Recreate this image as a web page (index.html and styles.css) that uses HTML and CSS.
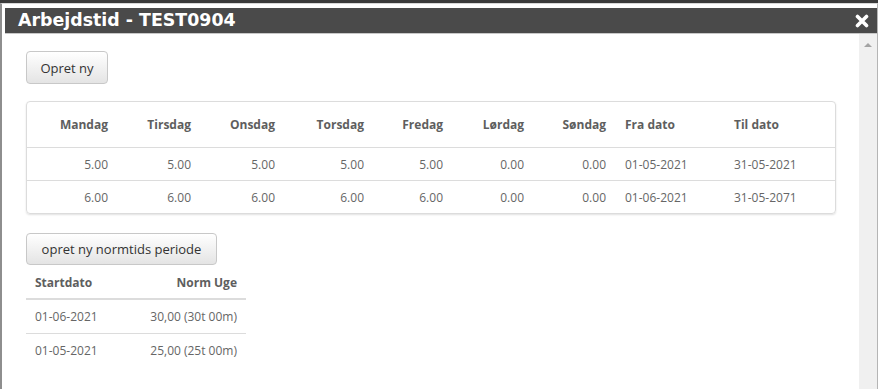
FILE: index.html
```html
<!DOCTYPE html>
<html lang="da">
<head>
<meta charset="utf-8">
<title>Arbejdstid</title>
<link rel="stylesheet" href="styles.css">
</head>
<body>
<div class="dialog">
  <div class="titlebar">
    <span class="title">Arbejdstid - TEST0904</span>
    <svg class="close" width="14" height="14" viewBox="0 0 14 14" aria-label="Luk">
      <path d="M2.5 2.5 L11.5 11.5 M11.5 2.5 L2.5 11.5" stroke="#fff" stroke-width="3.6" stroke-linecap="round"/>
    </svg>
  </div>
  <div class="content">
    <div class="main">
      <button class="btn btn-first">Opret ny</button>
      <div class="panel">
        <table class="week">
          <colgroup>
            <col class="c1"><col class="c2"><col class="c3"><col class="c4"><col class="c5"><col class="c6"><col class="c7"><col class="c8"><col class="c9">
          </colgroup>
          <thead>
            <tr>
              <th class="num">Mandag</th><th class="num">Tirsdag</th><th class="num">Onsdag</th><th class="num">Torsdag</th><th class="num">Fredag</th><th class="num">Lørdag</th><th class="num">Søndag</th><th class="date">Fra dato</th><th class="date">Til dato</th>
            </tr>
          </thead>
          <tbody>
            <tr>
              <td class="num">5.00</td><td class="num">5.00</td><td class="num">5.00</td><td class="num">5.00</td><td class="num">5.00</td><td class="num">0.00</td><td class="num">0.00</td><td class="date">01-05-2021</td><td class="date">31-05-2021</td>
            </tr>
            <tr>
              <td class="num">6.00</td><td class="num">6.00</td><td class="num">6.00</td><td class="num">6.00</td><td class="num">6.00</td><td class="num">0.00</td><td class="num">0.00</td><td class="date">01-06-2021</td><td class="date">31-05-2071</td>
            </tr>
          </tbody>
        </table>
      </div>
      <button class="btn btn-second">opret ny normtids periode</button>
      <table class="norm">
        <thead>
          <tr><th class="left">Startdato</th><th class="right">Norm Uge</th></tr>
        </thead>
        <tbody>
          <tr><td class="left">01-06-2021</td><td class="right">30,00 (30t 00m)</td></tr>
          <tr><td class="left">01-05-2021</td><td class="right">25,00 (25t 00m)</td></tr>
        </tbody>
      </table>
    </div>
    <div class="scrollbar">
      <span class="arrow-up"></span>
    </div>
  </div>
</div>
</body>
</html>
```

FILE: styles.css
```css
html, body {
  margin: 0;
  padding: 0;
}
body {
  background: #3a3a3a;
  font-family: "Open Sans", "Liberation Sans", sans-serif;
  overflow: hidden;
}
.dialog {
  margin-top: 3px;
  height: 386px;
  box-sizing: border-box;
  background: #fff;
  border-left: 2px solid #8e8e8e;
  border-right: 1px solid #b5b5b5;
  border-top: 1px solid #d8d8d8;
  padding-top: 4px;
  display: flex;
  flex-direction: column;
}
.titlebar {
  margin-left: 3px;
  height: 25px;
  background: #4a4a4a;
  border-bottom: 1px solid #c8c8c8;
  display: flex;
  align-items: center;
  justify-content: space-between;
  padding: 0 8px 0 13px;
  flex: none;
}
.title {
  font-family: "DejaVu Sans", Verdana, sans-serif;
  font-weight: bold;
  font-size: 17.4px;
  color: #fff;
  line-height: 25px;
}
.close {
  display: block;
  margin-top: 1px;
}
.content {
  flex: 1;
  display: flex;
  min-height: 0;
}
.main {
  flex: 1;
  padding: 17px 0 0 24px;
  display: flex;
  flex-direction: column;
  align-items: flex-start;
}
.scrollbar {
  width: 18px;
  background: #f0f0f0;
  display: flex;
  justify-content: center;
  padding-top: 9px;
  box-sizing: border-box;
}
.arrow-up {
  width: 0;
  height: 0;
  border-left: 4px solid transparent;
  border-right: 4px solid transparent;
  border-bottom: 4px solid #a3a3a3;
}
.btn {
  font-family: "Open Sans", "Liberation Sans", sans-serif;
  font-size: 13px;
  color: #333;
  background: linear-gradient(#ffffff, #e4e4e4);
  border: 1px solid #c8c8c8;
  border-radius: 4px;
  padding: 0;
  margin: 0;
  white-space: nowrap;
  text-align: center;
  cursor: pointer;
}
.btn-first {
  height: 33px;
  width: 82px;
}
.btn-second {
  height: 32px;
  width: 191px;
  margin-top: 19px;
}
.panel {
  margin-top: 17px;
  width: 810px;
  box-sizing: border-box;
  border: 1px solid #dcdcdc;
  border-radius: 4px;
  box-shadow: 0 1px 2px rgba(0, 0, 0, 0.12);
}
table {
  border-collapse: collapse;
  font-size: 12px;
}
.week {
  width: 808px;
  table-layout: fixed;
}
.c1 { width: 89px; }
.c2 { width: 83px; }
.c3 { width: 84px; }
.c4 { width: 89px; }
.c5 { width: 79px; }
.c6 { width: 81px; }
.c7 { width: 82px; }
.c8 { width: 109px; }
.c9 { width: 112px; }
.week th, .norm th {
  font-weight: 700;
  color: #5e5e5e;
}
.week td, .norm td {
  color: #666;
}
.week th {
  height: 45px;
  border-bottom: 1px solid #dcdcdc;
}
.week td {
  height: 32px;
}
.week tbody tr + tr td {
  border-top: 1px solid #dcdcdc;
}
.week .num {
  text-align: right;
  padding: 0 8px;
}
.week .date {
  text-align: left;
  padding: 0 8px 0 11px;
}
.norm {
  width: 220px;
  margin-top: 2px;
}
.norm th {
  height: 31px;
  border-bottom: 2px solid #dcdcdc;
}
.norm td {
  height: 33px;
}
.norm tbody tr + tr td {
  border-top: 1px solid #dcdcdc;
}
.norm .left {
  text-align: left;
  padding: 0 9px;
}
.norm .right {
  text-align: right;
  padding: 0 9px;
}
```
